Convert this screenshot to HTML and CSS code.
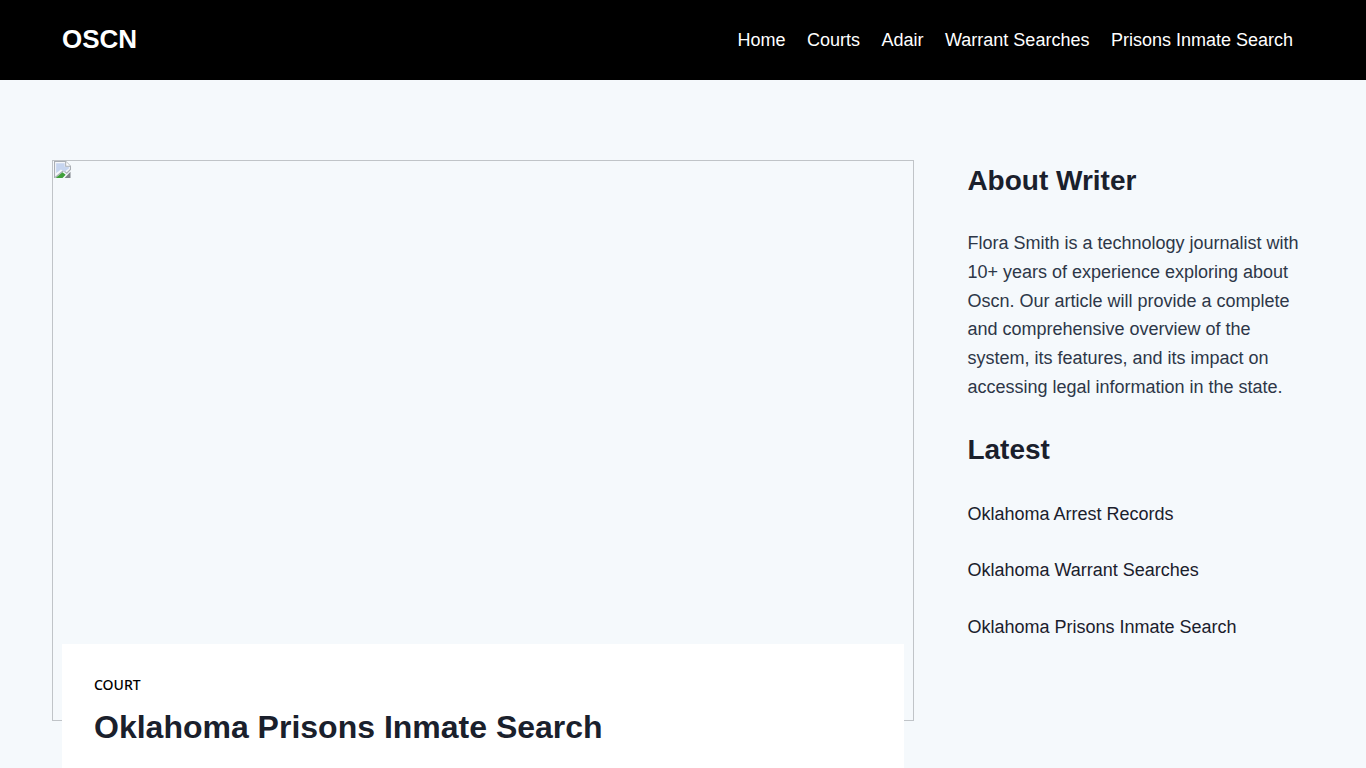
FILE: index.html
```html
<!DOCTYPE html>
<html>
<head>
	<title>Oklahoma Prisons Inmate Search</title>
	<link rel="stylesheet" href="styles.css">
</head>
<body>

	<header class="topbar">
		<a class="logo" href="#">OSCN</a>
		<nav class="menu">
			<a href="#">Home</a>
			<a href="#">Courts</a>
			<a href="#">Adair</a>
			<a href="#">Warrant Searches</a>
			<a href="#">Prisons Inmate Search</a>
		</nav>
	</header>

	<main class="page">
		<article class="post">
			<div class="picture">
				<svg class="broken" width="17" height="17" viewBox="0 0 16 16">
					<path d="M0.5 0.5H11L15.5 5V8L12 11.5L9 9L0.5 16Z" fill="#f4f7fb" stroke="#a9aeb4"/>
					<path d="M2 15.5L8 10.5L11 13L8 16H2Z" fill="#3fa03a"/>
					<path d="M2 2H10V5.5H14V7L10 10L6.5 8L2 11.5V2Z" fill="#c6d5ef"/>
					<path d="M15.5 10V16H10L15.5 10Z" fill="#7f8389"/>
					<path d="M11 0.5V5H15.5" fill="#fff" stroke="#a9aeb4"/>
				</svg>
			</div>
			<div class="card">
				<div class="tag">COURT</div>
				<h1>Oklahoma Prisons Inmate Search</h1>
			</div>
		</article>

		<aside class="side">
			<h2>About Writer</h2>
			<p>Flora Smith is a technology journalist with 10+ years of experience exploring about Oscn. Our article will provide a complete and comprehensive overview of the system, its features, and its impact on accessing legal information in the state.</p>
			<h2>Latest</h2>
			<ul class="latest">
				<li><a href="#">Oklahoma Arrest Records</a></li>
				<li><a href="#">Oklahoma Warrant Searches</a></li>
				<li><a href="#">Oklahoma Prisons Inmate Search</a></li>
			</ul>
		</aside>
	</main>

</body>
</html>
```

FILE: styles.css
```css
html, body {
	height: 100%;
}
body {
	background: #f5f9fc;
	color: #1a202c;
	font-family: "Liberation Sans", Arial, sans-serif;
	margin: 0;
}
a {
	color: inherit;
	text-decoration: none;
}
.topbar {
	background: #000;
	color: #fff;
	height: 80px;
	display: flex;
	align-items: center;
	justify-content: space-between;
	padding: 0 73px 0 62px;
}
.logo {
	font-size: 26px;
	font-weight: bold;
	margin-bottom: 2px;
}
.menu {
	display: flex;
	gap: 21.5px;
	font-size: 18px;
}
.page {
	display: flex;
	padding: 80px 0 0 52px;
}
.post {
	width: 862px;
	flex: none;
}
.picture {
	height: 559px;
	border: 1px solid #c0c4c8;
	line-height: 0;
}
.broken {
	display: block;
	margin: 0 0 0 1px;
}
.card {
	background: #fff;
	margin: -77px 10px 0;
	padding: 31px 32px 21px;
	position: relative;
}
.tag {
	color: #000;
	font-family: "Noto Sans", sans-serif;
	font-size: 14px;
	font-weight: 500;
	line-height: 20px;
}
h1 {
	color: #1a202c;
	font-size: 32px;
	font-weight: bold;
	line-height: 40px;
	margin: 12px 0 0;
}
.side {
	width: 345px;
	margin-left: 53.4px;
	padding-top: 1px;
}
h2 {
	color: #1a202c;
	font-size: 28px;
	font-weight: bold;
	line-height: 40px;
	margin: 0;
}
.side p {
	color: #2d3748;
	font-size: 18px;
	line-height: 28.8px;
	margin: 28px 0 28px;
}
.latest {
	list-style: none;
	margin: 30px 0 0;
	padding: 0;
	font-size: 18px;
	line-height: 28.8px;
}
.latest li {
	margin-bottom: 27.7px;
}
```
